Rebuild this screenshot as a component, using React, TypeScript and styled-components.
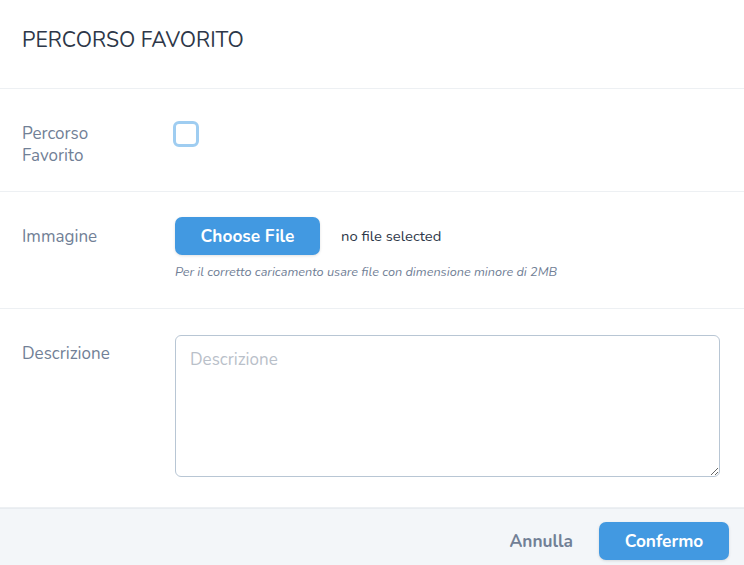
import React from 'react';
import styled, { createGlobalStyle } from 'styled-components';

const GlobalStyle = createGlobalStyle`
  html, body {
    margin: 0;
    padding: 0;
    background: #ffffff;
    overflow: hidden;
  }
  body {
    font-family: "Nunito", "Open Sans", "Noto Sans", sans-serif;
    color: #2d3748;
  }
  * { box-sizing: border-box; }
`;

const Modal = styled.div`
  width: 744px;
  background: #ffffff;
`;

const Header = styled.div`
  height: 89px;
  padding: 27px 22px 0;
  border-bottom: 1px solid #edf0f3;
`;

const Title = styled.h2`
  margin: 0;
  font-size: 21.2px;
  line-height: 26px;
  font-weight: 400;
  color: #2d3748;
`;

const Row = styled.div<{ $pt: number; $pb: number }>`
  display: grid;
  grid-template-columns: 153px 1fr;
  align-items: start;
  padding: ${(p) => p.$pt}px 24px ${(p) => p.$pb}px 22px;
  border-bottom: 1px solid #edf0f3;
  &:last-child { border-bottom: none; }
`;

const Label = styled.label<{ $mt?: number }>`
  margin-top: ${(p) => p.$mt ?? 0}px;
  font-size: 17px;
  line-height: 22px;
  color: #718096;
`;

const Checkbox = styled.span`
  display: block;
  width: 26px;
  height: 26px;
  margin-left: -2px;
  border: 3px solid #9fcdf1;
  border-radius: 6px;
  background: #ffffff;
`;

const FileLine = styled.div`
  display: flex;
  align-items: center;
  gap: 21px;
`;

const BlueButton = styled.button<{ $w: number }>`
  width: ${(p) => p.$w}px;
  height: 38px;
  border: none;
  border-radius: 7px;
  background: #4299e1;
  color: #ffffff;
  font-family: inherit;
  font-size: 17.3px;
  font-weight: 700;
  box-shadow: 0 1px 3px rgba(0, 0, 0, 0.12);
  cursor: pointer;
`;

const FileStatus = styled.span`
  font-size: 14.8px;
  color: #2d3748;
`;

const Hint = styled.p`
  margin: 9px 0 0;
  font-size: 12.7px;
  line-height: 16px;
  font-style: italic;
  color: #718096;
`;

const TextArea = styled.textarea`
  display: block;
  width: 545px;
  height: 142px;
  padding: 12px 14px;
  border: 1px solid #b8c6d4;
  border-radius: 6px;
  font-family: inherit;
  font-size: 17px;
  color: #2d3748;
  resize: vertical;
  outline: none;
  &::placeholder { color: #b9c0c9; }
`;

const Footer = styled.div`
  display: flex;
  justify-content: flex-end;
  align-items: center;
  gap: 26px;
  padding: 13px 15px 14px 22px;
  background: #f3f6f9;
  border-top: 1px solid #e8ecf0;
`;

const TextButton = styled.button`
  border: none;
  background: transparent;
  padding: 0;
  font-family: inherit;
  font-size: 17.3px;
  font-weight: 700;
  color: #718096;
  cursor: pointer;
`;

export default function App() {
  return (
    <Modal>
      <GlobalStyle />
      <Header>
        <Title>PERCORSO FAVORITO</Title>
      </Header>

      <Row $pt={32} $pb={24}>
        <Label $mt={2}>Percorso<br />Favorito</Label>
        <Checkbox />
      </Row>

      <Row $pt={25} $pb={28}>
        <Label $mt={9}>Immagine</Label>
        <div>
          <FileLine>
            <BlueButton $w={145}>Choose File</BlueButton>
            <FileStatus>no file selected</FileStatus>
          </FileLine>
          <Hint>Per il corretto caricamento usare file con dimensione minore di 2MB</Hint>
        </div>
      </Row>

      <Row $pt={26} $pb={30}>
        <Label $mt={8}>Descrizione</Label>
        <TextArea placeholder="Descrizione" />
      </Row>

      <Footer>
        <TextButton>Annulla</TextButton>
        <BlueButton $w={130}>Confermo</BlueButton>
      </Footer>
    </Modal>
  );
}
